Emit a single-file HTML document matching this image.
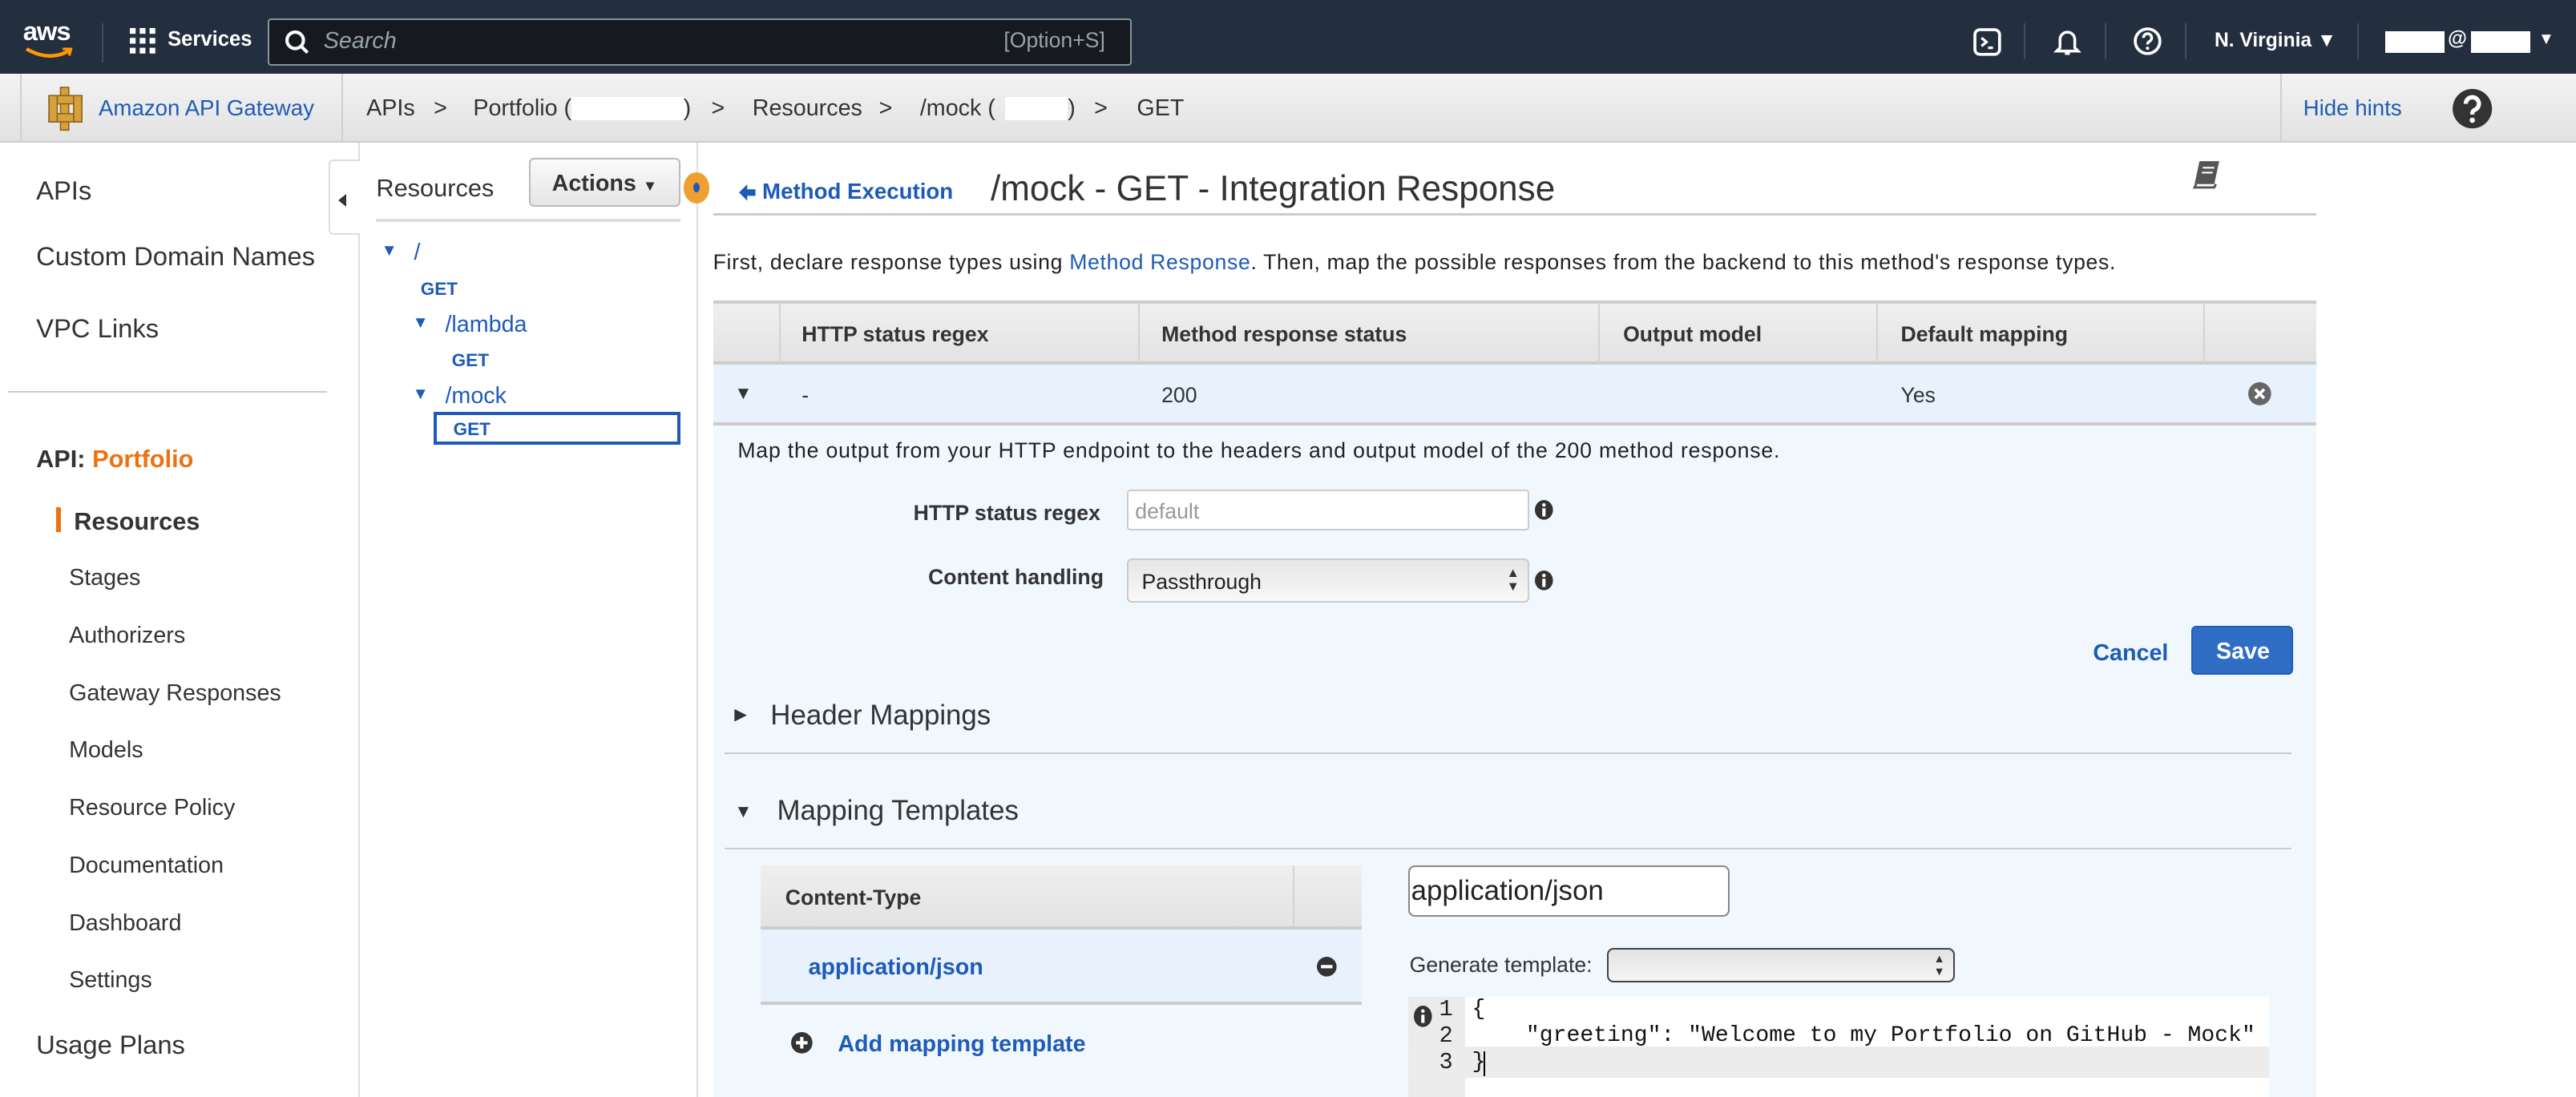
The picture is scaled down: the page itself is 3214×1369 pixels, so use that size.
<!DOCTYPE html>
<html><head><meta charset="utf-8">
<style>
*{box-sizing:border-box;margin:0;padding:0}
html,body{width:3214px;height:1368px;overflow:hidden;background:#fff}
#w{position:absolute;left:0;top:0;width:1568px;height:668px;zoom:2.0497;font-family:"Liberation Sans",Arial,sans-serif;color:#333;overflow:hidden}
.a{position:absolute;white-space:nowrap}
.blue{color:#1e5bb8}
.nav{font-size:14px;color:#333}
.th{font-size:13px;font-weight:bold;color:#333}
.bc{position:absolute;top:58px;font-size:14px;color:#333;white-space:nowrap}
.wb{position:absolute;top:59px;height:14px;background:#fff}
</style></head><body><div id="w">
<!-- top bar -->
<div class="a" style="left:0;top:0;width:1568px;height:45px;background:#232f3e"></div>
<div class="a" style="left:14px;top:10px;color:#fff;font-size:16px;font-weight:bold;letter-spacing:-0.5px">aws</div>
<svg class="a" style="left:14px;top:28px" width="32" height="10"><path d="M2 2 Q16 10 28 3" stroke="#f90" stroke-width="2.2" fill="none"/><path d="M24 2 L29 2 L28 6" stroke="#f90" stroke-width="1.6" fill="none"/></svg>
<div class="a" style="left:62px;top:14px;width:1px;height:24px;background:#414d5c"></div>
<svg class="a" style="left:79px;top:17px" width="16" height="16"><g fill="#fff"><rect x="0" y="0" width="3.5" height="3.5"/><rect x="6" y="0" width="3.5" height="3.5"/><rect x="12" y="0" width="3.5" height="3.5"/><rect x="0" y="6" width="3.5" height="3.5"/><rect x="6" y="6" width="3.5" height="3.5"/><rect x="12" y="6" width="3.5" height="3.5"/><rect x="0" y="12" width="3.5" height="3.5"/><rect x="6" y="12" width="3.5" height="3.5"/><rect x="12" y="12" width="3.5" height="3.5"/></g></svg>
<div class="a" style="left:102px;top:17px;color:#fff;font-size:12.5px;font-weight:bold">Services</div>
<div class="a" style="left:163px;top:11px;width:526px;height:29px;background:#16191f;border:1px solid #879596;border-radius:2px"></div>
<svg class="a" style="left:173px;top:18px" width="16" height="16"><circle cx="6.5" cy="6.5" r="5" stroke="#fff" stroke-width="2" fill="none"/><path d="M10 10 L14 14" stroke="#fff" stroke-width="2"/></svg>
<div class="a" style="left:197px;top:17px;color:#95a5a6;font-size:14px;font-style:italic">Search</div>
<div class="a" style="left:611px;top:17px;color:#95a5a6;font-size:13px">[Option+S]</div>
<svg class="a" style="left:1201px;top:17px" width="17" height="17"><rect x="1" y="1" width="15" height="15" rx="3" stroke="#fff" stroke-width="1.8" fill="none"/><path d="M5 6 L8 8.5 L5 11 M9 12 H12" stroke="#fff" stroke-width="1.6" fill="none"/></svg>
<div class="a" style="left:1232px;top:14px;width:1px;height:22px;background:#414d5c"></div>
<svg class="a" style="left:1250px;top:16px" width="17" height="18"><path d="M4 13 V8 a4.5 4.5 0 0 1 9 0 V13 L15 15 H2 Z M7 16.5 H10" stroke="#fff" stroke-width="1.7" fill="none"/></svg>
<div class="a" style="left:1281px;top:14px;width:1px;height:22px;background:#414d5c"></div>
<svg class="a" style="left:1298px;top:16px" width="18" height="18"><circle cx="9" cy="9" r="7.5" stroke="#fff" stroke-width="1.8" fill="none"/><path d="M6.5 7 a2.5 2.5 0 1 1 3.5 2.2 C9 9.8 9 10.5 9 11" stroke="#fff" stroke-width="1.7" fill="none"/><circle cx="9" cy="13.3" r="1" fill="#fff"/></svg>
<div class="a" style="left:1330px;top:14px;width:1px;height:22px;background:#414d5c"></div>
<div class="a" style="left:1348px;top:18px;color:#fff;font-size:12px;font-weight:bold">N. Virginia ▼</div>
<div class="a" style="left:1435px;top:14px;width:1px;height:22px;background:#414d5c"></div>
<div class="a" style="left:1452px;top:19px;width:36px;height:13px;background:#fff"></div>
<div class="a" style="left:1490px;top:17px;color:#fff;font-size:12px;font-weight:bold">@</div>
<div class="a" style="left:1504px;top:19px;width:36px;height:13px;background:#fff"></div>
<div class="a" style="left:1545px;top:18px;color:#fff;font-size:10px">▼</div>
<!-- secondary bar -->
<div class="a" style="left:0;top:45px;width:1568px;height:42px;background:linear-gradient(#f3f3f3,#e2e2e2);border-bottom:1px solid #ccc"></div>
<div class="a" style="left:12px;top:45px;width:1px;height:41px;background:#d0d0d0"></div>
<svg class="a" style="left:27px;top:52px" width="26" height="28"><g fill="#d7a03a" stroke="#8a6420" stroke-width="0.8"><rect x="10" y="1" width="5" height="26"/><rect x="3" y="6" width="20" height="5"/><rect x="3" y="17" width="20" height="5"/><rect x="3" y="6" width="5" height="16"/><rect x="18" y="6" width="5" height="16"/></g></svg>
<div class="a blue" style="left:60px;top:58px;font-size:13.5px">Amazon API Gateway</div>
<div class="a" style="left:208px;top:45px;width:1px;height:41px;background:#d0d0d0"></div>
<div class="bc" style="left:223px">APIs</div>
<div class="bc" style="left:264px">&gt;</div>
<div class="bc" style="left:288px">Portfolio (</div>
<div class="wb" style="left:348px;width:70px"></div>
<div class="bc" style="left:416px">)</div>
<div class="bc" style="left:433px">&gt;</div>
<div class="bc" style="left:458px">Resources</div>
<div class="bc" style="left:535px">&gt;</div>
<div class="bc" style="left:560px">/mock (</div>
<div class="wb" style="left:612px;width:38px"></div>
<div class="bc" style="left:650px">)</div>
<div class="bc" style="left:666px">&gt;</div>
<div class="bc" style="left:692px">GET</div>
<div class="a" style="left:1388px;top:45px;width:1px;height:41px;background:#d0d0d0"></div>
<div class="a blue" style="left:1402px;top:58px;font-size:13.5px">Hide hints</div>
<svg class="a" style="left:1492px;top:53px" width="26" height="26"><circle cx="13" cy="13" r="12" fill="#333"/><path d="M9 10 a4 4 0 1 1 5.5 3.7 C13 14.5 13 15.3 13 16.5" stroke="#fff" stroke-width="2.6" fill="none"/><circle cx="13" cy="20" r="1.6" fill="#fff"/></svg>
<!-- left nav -->
<div class="a" style="left:218px;top:87px;width:1px;height:581px;background:#ddd"></div>
<div class="a nav" style="left:22px;top:107px;font-size:16px">APIs</div>
<div class="a nav" style="left:22px;top:147px;font-size:16px">Custom Domain Names</div>
<div class="a nav" style="left:22px;top:191px;font-size:16px">VPC Links</div>
<div class="a" style="left:5px;top:238px;width:194px;height:1px;background:#ccc"></div>
<div class="a nav" style="left:22px;top:271px;font-size:15px;font-weight:bold">API: <span style="color:#ec7211">Portfolio</span></div>
<div class="a" style="left:34px;top:309px;width:3px;height:15px;background:#ec7211"></div>
<div class="a nav" style="left:45px;top:309px;font-size:15px;font-weight:bold">Resources</div>
<div class="a nav" style="left:42px;top:344px">Stages</div>
<div class="a nav" style="left:42px;top:379px">Authorizers</div>
<div class="a nav" style="left:42px;top:414px">Gateway Responses</div>
<div class="a nav" style="left:42px;top:449px">Models</div>
<div class="a nav" style="left:42px;top:484px">Resource Policy</div>
<div class="a nav" style="left:42px;top:519px">Documentation</div>
<div class="a nav" style="left:42px;top:554px">Dashboard</div>
<div class="a nav" style="left:42px;top:589px">Settings</div>
<div class="a nav" style="left:22px;top:627px;font-size:16px">Usage Plans</div>
<!-- resources panel -->
<div class="a" style="left:200px;top:97px;width:19px;height:46px;background:#fff;border:1px solid #ddd;border-right:none;border-radius:3px 0 0 3px"></div>
<div class="a" style="left:206px;top:118px;width:0;height:0;border-top:4px solid transparent;border-bottom:4px solid transparent;border-right:5px solid #333"></div>
<div class="a" style="left:229px;top:106px;font-size:15px;color:#333">Resources</div>
<div class="a" style="left:322px;top:96px;width:92px;height:30px;background:linear-gradient(#fafafa,#e6e6e6);border:1px solid #bbb;border-radius:3px;font-size:14px;font-weight:bold;color:#333;padding:7px 0 0 13px">Actions <span style="font-size:9px">▼</span></div>
<div class="a" style="left:229px;top:133px;width:185px;height:2px;background:#ddd"></div>
<div class="a" style="left:424px;top:87px;width:1px;height:581px;background:#ddd"></div>
<div class="a" style="left:416px;top:105px;width:16px;height:19px;border-radius:50%;background:#f0a030"></div>
<div class="a" style="left:422px;top:111px;width:4px;height:6px;border-radius:50%;background:#1e5bb8"></div>
<div class="a blue" style="left:232px;top:147px;font-size:10px">▼</div><div class="a blue" style="left:252px;top:146px;font-size:14px">/</div>
<div class="a blue" style="left:256px;top:170px;font-size:11px;font-weight:bold">GET</div>
<div class="a blue" style="left:251px;top:191px;font-size:10px">▼</div><div class="a blue" style="left:271px;top:190px;font-size:14px">/lambda</div>
<div class="a blue" style="left:275px;top:213px;font-size:11px;font-weight:bold">GET</div>
<div class="a blue" style="left:251px;top:234px;font-size:10px">▼</div><div class="a blue" style="left:271px;top:233px;font-size:14px">/mock</div>
<div class="a blue" style="left:264px;top:251px;width:150px;height:20px;border:2px solid #1e5bb8;font-size:11px;font-weight:bold;padding:2px 0 0 10px">GET</div>
<!-- main header -->
<svg class="a" style="left:449px;top:111px" width="12" height="12"><path d="M1 6 L6 1 L6 4 L11 4 L11 8 L6 8 L6 11 Z" fill="#1e5bb8"/></svg>
<div class="a blue" style="left:464px;top:109px;font-size:13.5px;font-weight:bold">Method Execution</div>
<div class="a" style="left:603px;top:103px;font-size:21.5px;color:#333">/mock - GET - Integration Response</div>
<svg class="a" style="left:1334px;top:96px" width="20" height="20"><path d="M5 2 H17 L14 16 H2 Z" fill="#555"/><path d="M3 16 L2 18 H14 L15 16" stroke="#555" stroke-width="1.4" fill="none"/><path d="M7 6 H14 M6.5 9 H13" stroke="#fff" stroke-width="1"/></svg>
<div class="a" style="left:434px;top:130px;width:976px;height:1px;background:#ccc"></div>
<div class="a" style="left:434px;top:152px;font-size:13px;color:#222;letter-spacing:0.33px">First, declare response types using <span class="blue">Method Response</span>. Then, map the possible responses from the backend to this method's response types.</div>
<!-- table -->
<div class="a" style="left:434px;top:183px;width:976px;height:39px;background:linear-gradient(#efefef,#e3e3e3);border-top:2px solid #ccc;border-bottom:2px solid #ccc"></div>
<div class="a" style="left:474px;top:184px;width:1px;height:37px;background:#d3d3d3"></div>
<div class="a" style="left:693px;top:184px;width:1px;height:37px;background:#d3d3d3"></div>
<div class="a" style="left:973px;top:184px;width:1px;height:37px;background:#d3d3d3"></div>
<div class="a" style="left:1142px;top:184px;width:1px;height:37px;background:#d3d3d3"></div>
<div class="a" style="left:1341px;top:184px;width:1px;height:37px;background:#d3d3d3"></div>
<div class="a th" style="left:488px;top:196px">HTTP status regex</div>
<div class="a th" style="left:707px;top:196px">Method response status</div>
<div class="a th" style="left:988px;top:196px">Output model</div>
<div class="a th" style="left:1157px;top:196px">Default mapping</div>
<div class="a" style="left:434px;top:222px;width:976px;height:37px;background:#e8f2fc;border-bottom:2px solid #ccc"></div>
<div class="a" style="left:447px;top:233px;font-size:11px;color:#333">▼</div>
<div class="a" style="left:488px;top:233px;font-size:13px">-</div>
<div class="a" style="left:707px;top:233px;font-size:13px">200</div>
<div class="a" style="left:1157px;top:233px;font-size:13px">Yes</div>
<svg class="a" style="left:1368px;top:232px" width="15" height="15"><circle cx="7.5" cy="7.5" r="7" fill="#666"/><path d="M4.8 4.8 L10.2 10.2 M10.2 4.8 L4.8 10.2" stroke="#fff" stroke-width="1.8"/></svg>
<!-- expanded -->
<div class="a" style="left:434px;top:259px;width:976px;height:410px;background:#f0f7fd"></div>
<div class="a" style="left:449px;top:267px;font-size:13px;color:#222;letter-spacing:0.4px">Map the output from your HTTP endpoint to the headers and output model of the 200 method response.</div>
<div class="a th" style="left:556px;top:305px">HTTP status regex</div>
<div class="a" style="left:686px;top:298px;width:245px;height:25px;background:#fff;border:1px solid #ccc;border-radius:2px;font-size:13px;color:#999;padding:5px 0 0 4px">default</div>
<svg class="a" style="left:934px;top:304px" width="12" height="13"><ellipse cx="6" cy="6.5" rx="5.5" ry="6" fill="#333"/><rect x="5" y="5.5" width="2" height="5" fill="#fff"/><circle cx="6" cy="3.5" r="1.1" fill="#fff"/></svg>
<div class="a th" style="left:565px;top:344px">Content handling</div>
<div class="a" style="left:686px;top:340px;width:245px;height:27px;background:linear-gradient(#e6e6e6,#f8f8f8);border:1px solid #ccc;border-radius:3px;font-size:13px;color:#222;padding:6px 0 0 8px">Passthrough</div>
<div class="a" style="left:917px;top:345px;font-size:8px;line-height:8px;color:#333">▲<br>▼</div>
<svg class="a" style="left:934px;top:347px" width="12" height="13"><ellipse cx="6" cy="6.5" rx="5.5" ry="6" fill="#333"/><rect x="5" y="5.5" width="2" height="5" fill="#fff"/><circle cx="6" cy="3.5" r="1.1" fill="#fff"/></svg>
<div class="a blue" style="left:1274px;top:390px;font-size:14px;font-weight:bold">Cancel</div>
<div class="a" style="left:1334px;top:381px;width:62px;height:30px;background:#2f6ec4;border:1px solid #1e5bb8;border-radius:3px;color:#fff;font-size:14px;font-weight:bold;padding:7px 0 0 14px">Save</div>
<div class="a" style="left:447px;top:429px;font-size:10px;color:#333">▶</div>
<div class="a" style="left:469px;top:426px;font-size:17px;color:#333">Header Mappings</div>
<div class="a" style="left:441px;top:458px;width:954px;height:1px;background:#ccc"></div>
<div class="a" style="left:447px;top:488px;font-size:11px;color:#333">▼</div>
<div class="a" style="left:473px;top:484px;font-size:17px;color:#333">Mapping Templates</div>
<div class="a" style="left:441px;top:516px;width:954px;height:1px;background:#ccc"></div>
<div class="a" style="left:463px;top:527px;width:366px;height:39px;background:linear-gradient(#efefef,#e3e3e3);border-bottom:2px solid #ccc"></div>
<div class="a" style="left:787px;top:527px;width:1px;height:37px;background:#d3d3d3"></div>
<div class="a th" style="left:478px;top:539px">Content-Type</div>
<div class="a" style="left:463px;top:566px;width:366px;height:46px;background:#e8f2fc;border-bottom:2px solid #ccc"></div>
<div class="a blue" style="left:492px;top:581px;font-size:14px;font-weight:bold">application/json</div>
<svg class="a" style="left:801px;top:582px" width="13" height="13"><circle cx="6.5" cy="6.5" r="6" fill="#333"/><rect x="3" y="5.5" width="7" height="2" fill="#fff"/></svg>
<svg class="a" style="left:481px;top:628px" width="14" height="14"><circle cx="7" cy="7" r="6.5" fill="#333"/><path d="M3.5 7 H10.5 M7 3.5 V10.5" stroke="#fff" stroke-width="2"/></svg>
<div class="a blue" style="left:510px;top:628px;font-size:14px;font-weight:bold">Add mapping template</div>
<div class="a" style="left:857px;top:527px;width:196px;height:31px;background:#fff;border:1px solid #888;border-radius:4px;font-size:17px;color:#222;padding:5px 0 0 1px">application/json</div>
<div class="a" style="left:858px;top:580px;font-size:13px;color:#333">Generate template:</div>
<div class="a" style="left:978px;top:577px;width:212px;height:21px;background:linear-gradient(#e2e2e2,#f5f5f5);border:1px solid #444;border-radius:4px"></div>
<div class="a" style="left:1177px;top:580px;font-size:7px;line-height:8px;color:#333">▲<br>▼</div>
<div class="a" style="left:857px;top:607px;width:524px;height:61px;background:#fff"></div>
<div class="a" style="left:857px;top:607px;width:35px;height:61px;background:#ebebeb"></div>
<div class="a" style="left:857px;top:637px;width:524px;height:19px;background:#ececec"></div>
<svg class="a" style="left:860px;top:612px" width="12" height="14"><ellipse cx="6" cy="7" rx="5.5" ry="6.5" fill="#333"/><rect x="5" y="6" width="2" height="5" fill="#fff"/><circle cx="6" cy="3.8" r="1.1" fill="#fff"/></svg>
<div class="a" style="left:876px;top:607px;font-family:'Liberation Mono',monospace;font-size:14px;line-height:16px;color:#222">1<br>2<br>3</div>
<div class="a" style="left:896px;top:607px;font-family:'Liberation Mono',monospace;font-size:13.7px;line-height:16px;color:#111;white-space:pre">{
    "greeting": "Welcome to my Portfolio on GitHub - Mock"
}</div>
<div class="a" style="left:903px;top:640px;width:1px;height:15px;background:#000"></div>
</div></body></html>
